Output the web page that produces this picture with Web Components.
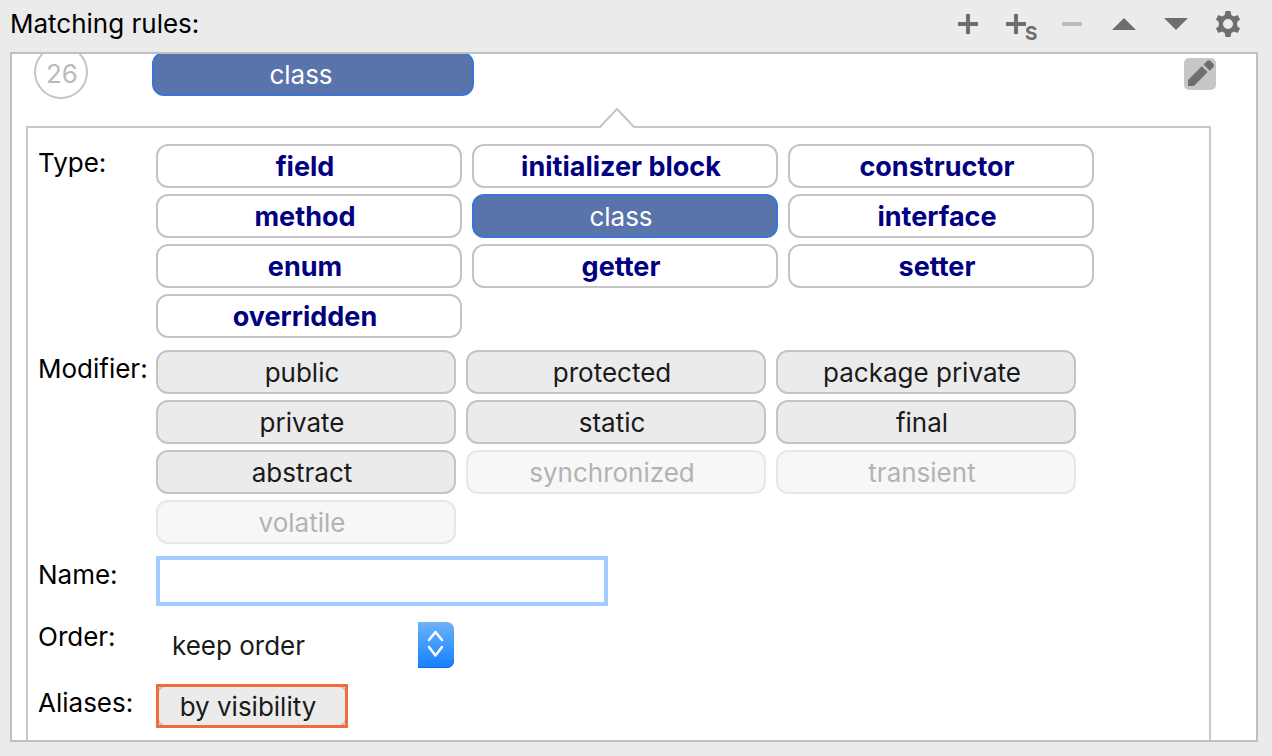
<!DOCTYPE html>
<html lang="en">
<head>
<meta charset="utf-8">
<title>Matching rules</title>
<style>
  html, body { height: 100%; margin: 0; }
  body { background: #ebebeb; font-family: Inter, "Liberation Sans", sans-serif; font-size: 26px; color: #000; }
</style>
</head>
<body>
<rules-editor></rules-editor>
<script>
const define = (name, html, setup) => {
  const template = document.createElement('template');
  template.innerHTML = html;
  customElements.define(name, class extends HTMLElement {
    constructor() {
      super();
      this.attachShadow({ mode: 'open' }).append(template.content.cloneNode(true));
    }
    connectedCallback() { if (setup) setup(this, this.shadowRoot); }
  });
};

define('tool-button', `
  <style>
    :host { display: block; }
    button { display: grid; place-items: center; width: 32px; height: 32px; padding: 0; border: 0; border-radius: 5px; background: none; font: inherit; }
    :host([pressed]) button { background: #c7c7c7; }
  </style>
  <button type="button"><slot></slot></button>`,
  (host, root) => {
    const button = root.querySelector('button');
    button.setAttribute('aria-label', host.getAttribute('label'));
    button.disabled = host.hasAttribute('disabled');
  });

define('rule-chip', `
  <style>
    :host { display: block; min-width: 0; }
    button {
      display: block; box-sizing: border-box; width: 100%; height: 44px; padding: 2px 8px 0 0;
      border: 2px solid #c4c4c4; border-radius: 12px; background: #ebebeb;
      font: inherit; line-height: 38px; text-align: center; color: #1a1a1a; white-space: nowrap; overflow: hidden;
    }
    :host([kind="type"]) button { background: #fff; color: #000080; font-size: 27px; font-weight: 700; }
    :host([selected]) button { background: #5974ab; border-color: #3875d6; color: #fff; }
    :host([kind="type"][selected]) button { background: #5974ab; color: #fff; font-size: 26px; font-weight: 400; }
    :host([disabled]) button { background: #f7f7f7; border-color: #e7e7e7; color: #b3b3b3; }
    :host([summary]) button { padding-right: 24px; }
    :host([outlined]) { outline: 3px solid #f26b3a; outline-offset: -3px; }
  </style>
  <button type="button"><slot></slot></button>`,
  (host, root) => {
    const button = root.querySelector('button');
    button.disabled = host.hasAttribute('disabled');
    if (host.hasAttribute('selected')) button.setAttribute('aria-pressed', 'true');
  });

define('rule-toolbar', `
  <style>
    :host { display: flex; align-items: center; justify-content: space-between; height: 52px; padding: 0 28px 4px 10px; box-sizing: border-box; }
    h1 { margin: 0; font-size: 26px; line-height: 32px; font-weight: 400; }
    div { display: flex; gap: 20px; }
    svg { display: block; overflow: visible; }
    text { font-size: 19px; font-weight: 700; }
  </style>
  <h1>Matching rules:</h1>
  <div role="toolbar" aria-label="Rule actions">
    <tool-button label="Add rule"><svg width="32" height="32" fill="#6e6e6e"><path d="M14 6h4v8h8v4h-8v8h-4v-8H6v-4h8z"/></svg></tool-button>
    <tool-button label="Add section rule"><svg width="32" height="32" fill="#6e6e6e"><path d="M10 6h4v8h8v4h-8v8h-4v-8H2v-4h8z"/><text x="21" y="32">S</text></svg></tool-button>
    <tool-button label="Remove rule" disabled><svg width="32" height="32" fill="#bdbdbd"><path d="M6 14h20v4H6z"/></svg></tool-button>
    <tool-button label="Move rule up"><svg width="32" height="32" fill="#6e6e6e"><path d="M4 22 16 10 28 22z"/></svg></tool-button>
    <tool-button label="Move rule down"><svg width="32" height="32" fill="#6e6e6e"><path d="M4 10h24L16 22z"/></svg></tool-button>
    <tool-button label="Settings"><svg width="32" height="32"><path fill="#6e6e6e" fill-rule="evenodd" d="M13.500 3h5l.8 3.900 2.600 1.500 3.700-1.300 2.500 4.400-2.900 2.600v3.800l2.900 2.600-2.500 4.400-3.700-1.300-2.600 1.500-.8 3.900h-5l-.8-3.900-2.600-1.500-3.700 1.300-2.500-4.400 2.900-2.600v-3.800l-2.900-2.600 2.500-4.400 3.700 1.300 2.600-1.500zM16 11a5 5 0 1 0 0 10a5 5 0 1 0 0-10z"/></svg></tool-button>
  </div>`);

define('rule-summary', `
  <style>
    :host { display: flex; align-items: center; height: 56px; margin-top: -8px; padding: 0 40px 0 22px; }
    .number { box-sizing: border-box; width: 54px; height: 54px; margin-bottom: 4px; padding-left: 2px; border: 2px solid #c4c4c4; border-radius: 50%; color: #bbb; line-height: 54px; text-align: center; }
    rule-chip { flex: 0 1 322px; margin: 0 auto 0 64px; }
  </style>
  <span class="number"><slot name="number"></slot></span>
  <rule-chip summary selected><slot></slot></rule-chip>
  <tool-button label="Edit rule" pressed><svg width="32" height="32" fill="#6e6e6e" style="display:block"><path d="M4 22 17.800 8.200l5.800 5.800L10 28H4zM19.500 6.500l3.300-3.300q2-2 4 0l2.200 2.200q2 2 0 4l-3.300 3.300z"/></svg></tool-button>`);

define('form-row', `
  <style>
    :host { display: grid; grid-template-columns: 118px minmax(0, 1fr); }
    label { line-height: 38px; white-space: nowrap; }
    .chips { display: grid; grid-template-columns: repeat(3, minmax(0, var(--chip-width, 306px))); gap: 6px 10px; }
    input { box-sizing: border-box; width: 452px; max-width: 100%; height: 50px; padding: 0 12px; border: 4px solid #a3cdff; background: #fff; font: inherit; outline: 0; display: block; }
    .combo { position: relative; width: 298px; max-width: 100%; margin: 4px 0; }
    select { appearance: none; display: block; width: 100%; height: 46px; padding: 0 40px 0 16px; border: 0; background: none; font: inherit; color: #1a1a1a; }
    .combo svg { position: absolute; right: 0; top: 0; pointer-events: none; }
    .alias { width: 192px; }
  </style>
  <label></label>
  <div class="field"></div>`,
  (host, root) => {
    const field = root.querySelector('.field');
    const label = root.querySelector('label');
    const kind = host.getAttribute('kind');
    label.textContent = host.getAttribute('label');
    if (kind === 'text') {
      field.innerHTML = '<input id="control" type="text">';
      label.htmlFor = 'control';
    } else if (kind === 'select') {
      field.className = 'combo';
      field.innerHTML = `<select id="control"><option>keep order</option><option>order by name</option></select>
        <svg width="36" height="46"><defs><linearGradient id="blue" x2="0" y2="1"><stop stop-color="#6cb3fa"/><stop offset="1" stop-color="#1480ff"/></linearGradient></defs>
        <path fill="url(#blue)" d="M0 0h28q8 0 8 8v30q0 8-8 8H0z"/><path d="M0 45.500h28q7.500 0 7.500-7.500" fill="none" stroke="#0a66f0"/>
        <path d="M11 18 17.500 10 24 18M11 25l6.500 8.500L24 25" fill="none" stroke="#fff" stroke-width="2.500" stroke-linecap="round" stroke-linejoin="round"/></svg>`;
      label.htmlFor = 'control';
    } else {
      field.className = kind;
      field.append(document.createElement('slot'));
      field.setAttribute('role', 'group');
      field.setAttribute('aria-label', label.textContent);
    }
  });

define('rule-details', `
  <style>
    :host { position: relative; display: flex; flex-direction: column; gap: 12px; flex: 1 0 auto; margin: 24px 45px 0 14px; padding: 16px 10px 12px; border: 2px solid #c8c8c8; border-bottom: 0; }
    .notch { position: absolute; left: calc(50% - 20px); top: -21px; }
  </style>
  <svg class="notch" width="36" height="21"><path d="M1 21 18 2 36 21z" fill="#fff"/><path d="M0 20H1L18 2 35 20h1" fill="none" stroke="#c4c4c4" stroke-width="2"/></svg>
  <slot></slot>`);

define('rules-editor', `
  <style>
    :host { display: flex; flex-direction: column; height: 100%; box-sizing: border-box; padding-bottom: 14px; }
    .viewport { flex: 1 1 0; min-height: 0; display: flex; flex-direction: column; overflow: hidden; margin: 0 14px 0 10px; border: 2px solid #c0c0c0; background: #fff; }
    form-row.modifiers { --chip-width: 300px; }
  </style>
  <rule-toolbar></rule-toolbar>
  <div class="viewport">
    <rule-summary><span slot="number">26</span>class</rule-summary>
    <rule-details>
      <form-row label="Type:" kind="chips">
        <rule-chip kind="type">field</rule-chip>
        <rule-chip kind="type">initializer block</rule-chip>
        <rule-chip kind="type">constructor</rule-chip>
        <rule-chip kind="type">method</rule-chip>
        <rule-chip kind="type" selected>class</rule-chip>
        <rule-chip kind="type">interface</rule-chip>
        <rule-chip kind="type">enum</rule-chip>
        <rule-chip kind="type">getter</rule-chip>
        <rule-chip kind="type">setter</rule-chip>
        <rule-chip kind="type">overridden</rule-chip>
      </form-row>
      <form-row class="modifiers" label="Modifier:" kind="chips">
        <rule-chip>public</rule-chip>
        <rule-chip>protected</rule-chip>
        <rule-chip>package private</rule-chip>
        <rule-chip>private</rule-chip>
        <rule-chip>static</rule-chip>
        <rule-chip>final</rule-chip>
        <rule-chip>abstract</rule-chip>
        <rule-chip disabled>synchronized</rule-chip>
        <rule-chip disabled>transient</rule-chip>
        <rule-chip disabled>volatile</rule-chip>
      </form-row>
      <form-row label="Name:" kind="text"></form-row>
      <form-row label="Order:" kind="select"></form-row>
      <form-row label="Aliases:" kind="alias"><rule-chip outlined>by visibility</rule-chip></form-row>
    </rule-details>
  </div>`);
</script>
</body>
</html>
